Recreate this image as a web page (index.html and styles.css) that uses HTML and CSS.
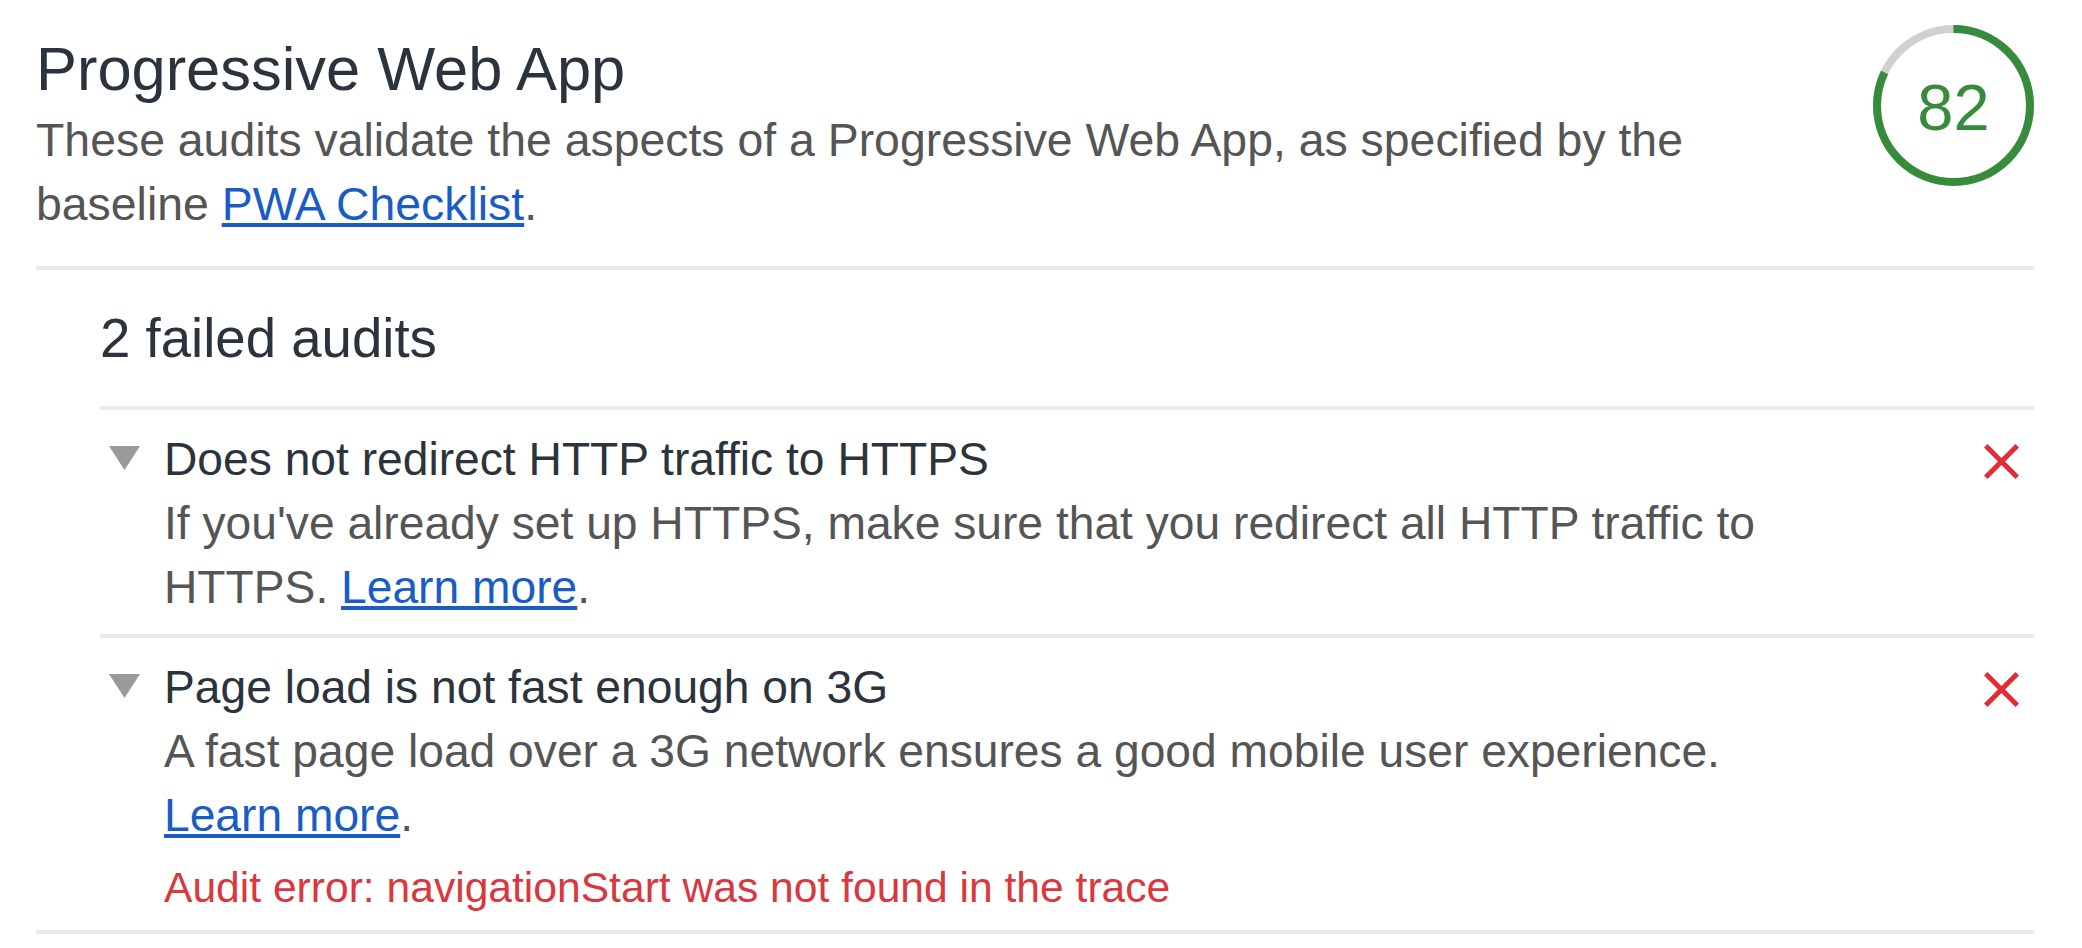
FILE: index.html
```html
<!DOCTYPE html>
<html lang="en">
<head>
<meta charset="utf-8">
<title>Progressive Web App</title>
<link rel="stylesheet" href="styles.css">
</head>
<body>
<section class="category">
  <header class="cat-header">
    <div class="cat-text">
      <h1 class="cat-title">Progressive Web App</h1>
      <p class="cat-desc">These audits validate the aspects of a Progressive Web App, as specified by the baseline <a class="link" href="#">PWA Checklist</a>.</p>
    </div>
    <div class="gauge">
      <svg class="gauge-ring" viewBox="0 0 161 161" width="161" height="161">
        <circle class="ring-base" cx="80.5" cy="80.5" r="76.5"></circle>
        <circle class="ring-arc" cx="80.5" cy="80.5" r="76.5" transform="rotate(-90 80.5 80.5)"></circle>
      </svg>
      <span class="gauge-value">82</span>
    </div>
  </header>
  <div class="group">
    <div class="group-title">2 failed audits</div>
    <div class="audit">
      <svg class="arrow" viewBox="0 0 31 24" width="31" height="24"><polygon points="0,0 31,0 15.5,24"></polygon></svg>
      <div class="audit-body">
        <div class="audit-title">Does not redirect HTTP traffic to HTTPS</div>
        <div class="audit-desc">If you've already set up HTTPS, make sure that you redirect all HTTP traffic to HTTPS. <a class="link" href="#">Learn more</a>.</div>
      </div>
      <svg class="fail-icon" viewBox="5 5 14 14" width="35" height="35"><path d="M19 6.41L17.590 5 12 10.59 6.41 5 5 6.41 10.59 12 5 17.59 6.41 19 12 13.41 17.59 19 19 17.59 13.41 12z"></path></svg>
    </div>
    <div class="audit">
      <svg class="arrow" viewBox="0 0 31 24" width="31" height="24"><polygon points="0,0 31,0 15.5,24"></polygon></svg>
      <div class="audit-body">
        <div class="audit-title">Page load is not fast enough on 3G</div>
        <div class="audit-desc">A fast page load over a 3G network ensures a good mobile user experience. <a class="link" href="#">Learn more</a>.</div>
        <div class="audit-error">Audit error: navigationStart was not found in the trace</div>
      </div>
      <svg class="fail-icon" viewBox="5 5 14 14" width="35" height="35"><path d="M19 6.41L17.59 5 12 10.59 6.41 5 5 6.41 10.59 12 5 17.59 6.41 19 12 13.41 17.59 19 19 17.59 13.41 12z"></path></svg>
    </div>
  </div>
</section>
</body>
</html>
```
FILE: styles.css
```css
html, body {
  margin: 0;
  padding: 0;
  background: #ffffff;
}

body {
  font-family: "Liberation Sans", Arial, Helvetica, sans-serif;
  color: #2b333c;
}

.category {
  margin: 0 48px 0 36px;
  border-bottom: 4px solid #ebebeb;
}

.cat-header {
  display: flex;
  align-items: flex-start;
  gap: 60px;
  padding: 25px 0 30px;
  border-bottom: 4px solid #ebebeb;
}

.cat-text {
  flex: 1;
  padding-top: 11px;
}

.cat-title {
  margin: 0 0 6px;
  font-size: 61.4px;
  line-height: 66px;
  font-weight: 400;
  color: #2b333c;
}

.cat-desc {
  margin: 0;
  font-size: 46.4px;
  line-height: 64px;
  color: #555555;
}

.link {
  color: #1a5cc6;
  text-decoration: underline;
}

.gauge {
  flex: none;
  width: 161px;
  height: 161px;
  display: grid;
  place-items: center;
}

.gauge > * {
  grid-area: 1 / 1;
}

.gauge-ring {
  display: block;
}

.ring-base {
  fill: none;
  stroke: #d0d0d0;
  stroke-width: 8;
}

.ring-arc {
  fill: none;
  stroke: #378c3b;
  stroke-width: 8;
  stroke-dasharray: 394.14 480.66;
}

.gauge-value {
  font-size: 65px;
  line-height: 1;
  color: #378c3b;
  padding-top: 3px;
}

.group {
  margin-left: 64px;
}

.group-title {
  font-size: 54.6px;
  line-height: 64px;
  padding: 37px 0 35px;
  border-bottom: 4px solid #ebebeb;
  color: #2b333c;
}

.audit {
  display: flex;
  align-items: flex-start;
  padding: 17px 0 15px;
  border-bottom: 4px solid #ebebeb;
}

.audit:last-child {
  border-bottom: none;
}

.arrow {
  flex: none;
  display: block;
  margin: 19px 0 0 9px;
  fill: #9a9a9a;
}

.audit-body {
  flex: 1;
  margin-left: 24px;
}

.audit-title {
  font-size: 46.2px;
  line-height: 64px;
  color: #2b333c;
}

.audit-desc {
  font-size: 46.2px;
  line-height: 64px;
  color: #555555;
}

.audit-error {
  margin-top: 12px;
  font-size: 42.6px;
  line-height: 56px;
  color: #da373e;
}

.fail-icon {
  flex: none;
  display: block;
  margin: 17px 15px 0 150px;
  fill: #e52b2f;
}
```
